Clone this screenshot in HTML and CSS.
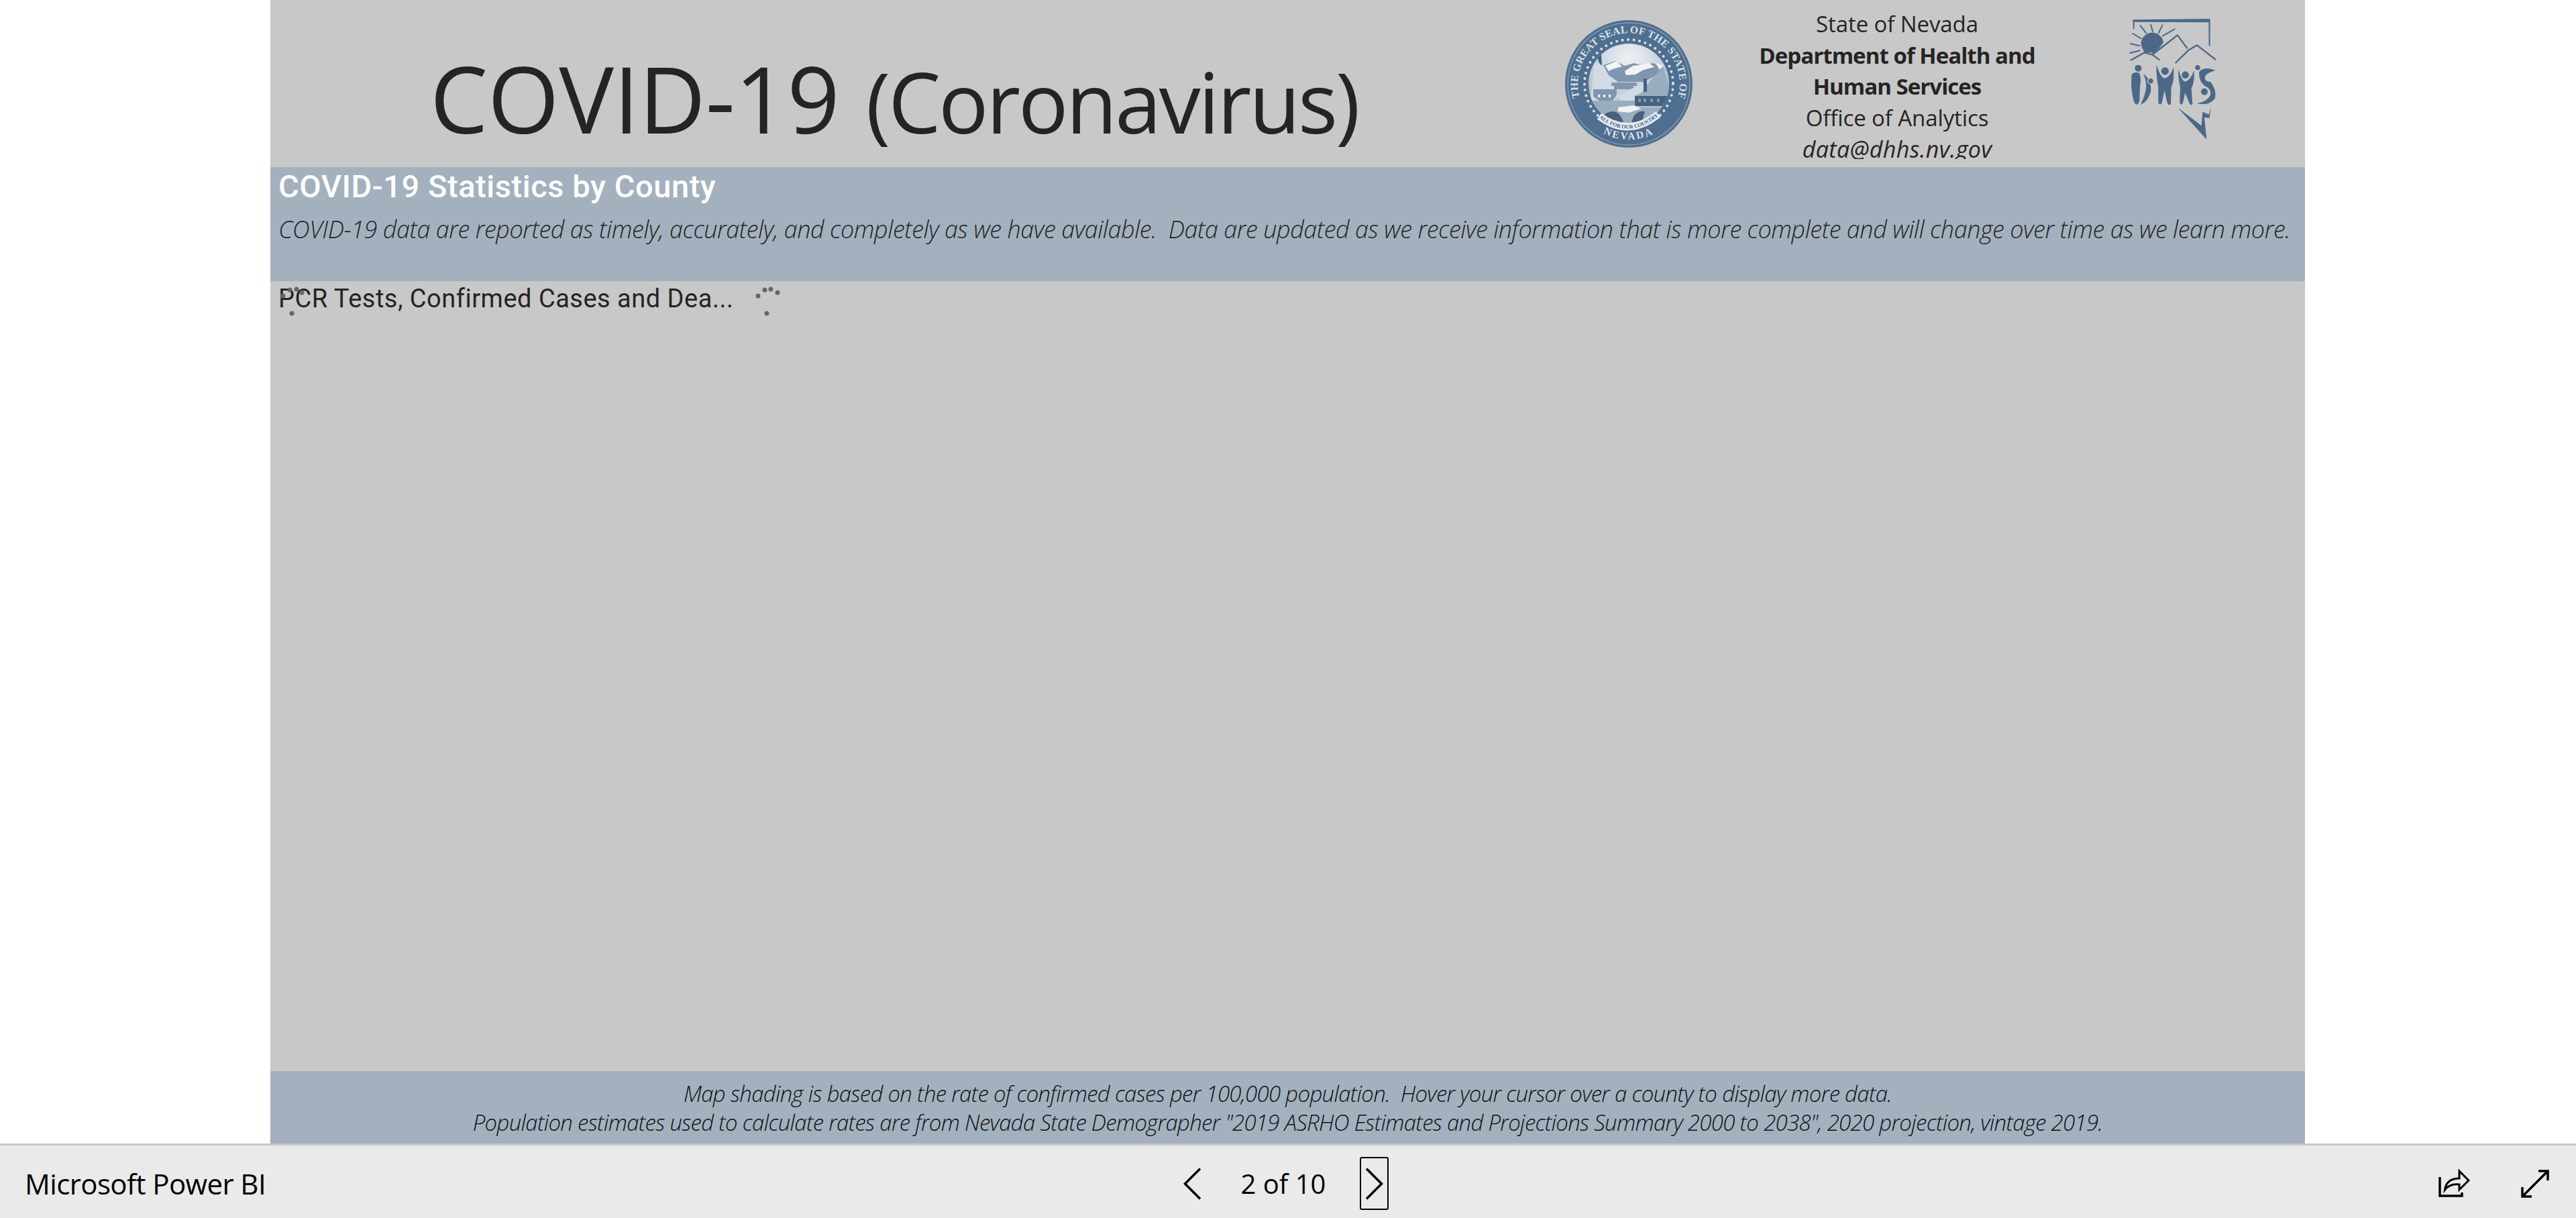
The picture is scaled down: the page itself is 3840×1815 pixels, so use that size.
FILE: index.html
```html
<!DOCTYPE html>
<html lang="en">
<head>
<meta charset="utf-8">
<title>Microsoft Power BI</title>
<link rel="stylesheet" href="styles.css">
</head>
<body>
<main class="report">
  <header class="masthead">
    <h1 class="title"><span class="title-main">COVID-19</span> <span class="title-sub">(Coronavirus)</span></h1>
    <svg class="seal" viewBox="0 0 250 230" aria-label="Great Seal of the State of Nevada">
      <defs>
        <clipPath id="sceneClip"><circle cx="128" cy="115" r="60"/></clipPath>
        <radialGradient id="sky" cx="50%" cy="18%" r="62%">
          <stop offset="0" stop-color="#eef1f4"/>
          <stop offset="1" stop-color="#b4c2d0"/>
        </radialGradient>
      </defs>
      <circle class="seal-edge" cx="128" cy="115" r="95"/>
      <circle class="seal-line" cx="128" cy="115" r="91"/>
      <path id="sealTop" class="seal-guide" d="M54.600 135A76 76 0 1 1 201.400 135"/>
      <path id="sealBottom" class="seal-guide" d="M83 184.700A83 83 0 0 0 173 184.700"/>
      <text class="seal-text"><textPath href="#sealTop" textLength="279" lengthAdjust="spacing">THE GREAT SEAL OF THE STATE OF</textPath></text>
      <text class="seal-text seal-text-low"><textPath href="#sealBottom" startOffset="50%" text-anchor="middle">NEVADA</textPath></text>
      <circle class="seal-dots" cx="128" cy="115" r="66"/>
      <circle cx="128" cy="115" r="60" fill="url(#sky)"/>
      <g clip-path="url(#sceneClip)">
        <path class="scene-soft" d="M157 113L180 90L192 132L170 132Z"/>
        <path class="scene-mid" d="M90 87L108 81L122 88L136 84L150 88L164 84L180 90L166 104L150 112L112 112L98 102Z"/>
        <path class="scene-snow" d="M93 88L110 81L118 89L104 93L98 96ZM122 96L134 88L150 86L157 83L166 90L150 94L138 101L124 102ZM168 84L180 88L174 94Z"/>
        <path class="scene-hill" d="M77 84L88 84L98 104L113 133L102 145L70 145Z"/>
        <path class="scene-dark" d="M80 72L87 72L88 88L84 84Z"/>
        <path class="scene-mid" d="M102 113H140V118H135V123H106V118H102Z"/>
        <path class="scene-hill" d="M113 133L132 122L150 116L146 136L136 147L118 146Z"/>
        <path class="scene-soft" d="M154 116L168 112L188 133H137L150 126Z"/>
        <path class="scene-dark" d="M150 127V107H155V127ZM137 133H187V148H137Z"/>
        <path class="scene-mid" d="M142 137h4v5h-4zM150 137h4v5h-4zM160 137h4v5h-4zM170 137h4v5h-4z"/>
        <path class="scene-mid" d="M75 123H110V132L104 140H84L75 134Z"/>
        <path class="scene-snow" d="M82 131h3v4h-3zM90 131h3v4h-3zM98 131h3v4h-3z"/>
        <path class="scene-soft" d="M68 140H137V150H190V180H68Z"/>
        <path class="scene-snow" d="M112 150L136 147L146 152L128 158L112 156Z"/>
        <path class="scene-dark" d="M92 160Q112 148 120 172L96 178ZM132 176Q134 154 152 156L146 178Z"/>
      </g>
      <path class="seal-ribbon" d="M84 163Q128 196 172 160"/>
      <path id="sealMotto" class="seal-guide" d="M84 166Q128 199 172 163"/>
      <text class="seal-motto"><textPath href="#sealMotto" startOffset="50%" text-anchor="middle">ALL FOR OUR COUNTRY</textPath></text>
    </svg>
    <div class="agency">
      <p class="agency-line">State of Nevada</p>
      <p class="agency-line agency-strong">Department of Health and</p>
      <p class="agency-line agency-strong">Human Services</p>
      <p class="agency-line">Office of Analytics</p>
      <p class="agency-line agency-mail">data@dhhs.nv.gov</p>
    </div>
    <svg class="dhhs" viewBox="0 0 600 690" aria-label="DHHS logo">
      <path class="logo-fill" d="M118 58L120 100L125 100L125 68L457 70L458 175L464 175L464 54Z"/>
      <path class="logo-ray" d="M152 85L178 118M199 80L207 112M250 82L233 118M305 100L252 130M118 120L155 142M108 165L148 175M105 207L150 196"/>
      <path class="logo-fill" d="M155 172A50 50 0 0 1 255 160L215 212L200 205L170 206Z"/>
      <path class="logo-ridge" d="M108 240L170 205L205 214L238 238M205 214L250 180L318 127L362 187"/>
      <path class="logo-ridge" d="M308 252L365 196L405 172L490 238"/>
      <circle class="logo-fill" cx="142" cy="275" r="15"/>
      <path class="logo-fill" d="M112 312Q112 290 145 295Q158 312 150 360L148 420Q140 448 125 430Q108 380 112 312Z"/>
      <path class="logo-fill" d="M165 300Q205 330 198 380Q185 425 153 438Q175 390 178 360Q178 325 165 300Z"/>
      <circle class="logo-gap" cx="198" cy="332" r="15"/>
      <circle class="logo-fill" cx="198" cy="332" r="11"/>
      <circle class="logo-fill" cx="262" cy="288" r="17"/>
      <path class="logo-fill" d="M224 258Q240 315 260 320Q285 315 300 270Q305 330 290 360L288 435Q280 445 272 430L260 375L248 430Q240 445 232 430L232 360Q222 310 224 258Z"/>
      <circle class="logo-fill" cx="353" cy="305" r="16"/>
      <path class="logo-fill" d="M322 278Q335 330 352 335Q375 330 392 285Q395 340 380 365L385 435Q378 445 370 430L352 385L342 430Q335 445 328 430L330 360Q320 320 322 278Z"/>
      <circle class="logo-fill" cx="408" cy="272" r="11"/>
      <path class="logo-fill" d="M415 290Q440 265 488 285Q450 295 442 310Q435 335 465 335Q495 375 485 410Q460 445 405 432Q450 425 465 395Q470 365 440 355Q410 330 415 290Z"/>
      <circle class="logo-gap" cx="438" cy="380" r="18"/>
      <circle class="logo-fill" cx="438" cy="380" r="15"/>
      <path class="logo-fill" d="M318 450L445 590L448 590L438 495L461 498L468 450L458 482L430 470L425 532Z"/>
    </svg>
  </header>

  <section class="intro">
    <h2 class="intro-title">COVID-19 Statistics by County</h2>
    <p class="intro-text">COVID-19 data are reported as timely, accurately, and completely as we have available.&nbsp; Data are updated as we receive information that is more complete and will change over time as we learn more.</p>
  </section>

  <section class="stage">
    <h3 class="visual-title">PCR Tests, Confirmed Cases and Dea...</h3>
    <svg class="spinner" width="760" height="60" viewBox="0 0 760 60" aria-hidden="true">
      <circle class="dot" cx="19" cy="22" r="3.5"/>
      <circle class="dot" cx="29" cy="13" r="3.5"/>
      <circle class="dot" cx="39" cy="12" r="3.5"/>
      <circle class="dot" cx="47" cy="17" r="3.5"/>
      <circle class="dot" cx="32" cy="48" r="3.5"/>
      <circle class="dot" cx="727" cy="22" r="3.5"/>
      <circle class="dot" cx="737" cy="13" r="3.5"/>
      <circle class="dot" cx="746" cy="12" r="3.5"/>
      <circle class="dot" cx="756" cy="17" r="3.5"/>
      <circle class="dot" cx="740" cy="48" r="3.5"/>
    </svg>
  </section>

  <footer class="notes">
    <p class="note">Map shading is based on the rate of confirmed cases per 100,000 population.&nbsp; Hover your cursor over a county to display more data.</p>
    <p class="note">Population estimates used to calculate rates are from Nevada State Demographer "2019 ASRHO Estimates and Projections Summary 2000 to 2038", 2020 projection, vintage 2019.</p>
  </footer>
</main>

<nav class="toolbar">
  <a class="brand">Microsoft Power BI</a>
  <div class="pager">
    <button class="nav-btn" aria-label="Previous page">
      <svg width="27" height="48" viewBox="0 0 27 48"><path class="glyph" d="M25 1.500L2.500 24L25 46.500"/></svg>
    </button>
    <span class="page-count">2 of 10</span>
    <button class="nav-btn nav-btn-focus" aria-label="Next page">
      <svg width="27" height="48" viewBox="0 0 27 48"><path class="glyph" d="M2 1.500L24.500 24L2 46.500"/></svg>
    </button>
  </div>
  <div class="actions">
    <svg class="action" width="48" height="44" viewBox="0 0 48 44" aria-label="Share">
      <path class="glyph" d="M3 12V40H36V35"/>
      <path class="glyph glyph-thin" d="M10.500 31C12 20 19 14 32 14V3L46 17L32 31V23C22 22 15 25 10.500 31Z"/>
    </svg>
    <svg class="action" width="44" height="44" viewBox="0 0 44 44" aria-label="Full screen">
      <path class="glyph" d="M3 41L41 3M27 3H41V17M3 27V41H17"/>
    </svg>
  </div>
</nav>
</body>
</html>
```
FILE: styles.css
```css
* { box-sizing: border-box; }
html, body { margin: 0; padding: 0; }
body {
  width: 3840px;
  height: 1815px;
  display: flex;
  flex-direction: column;
  overflow: hidden;
  background: #fff;
  color: #252423;
  font-family: "Open Sans", "Noto Sans", sans-serif;
}
p, h1, h2, h3 { margin: 0; font-weight: 400; }

.report {
  width: 3033px;
  height: 1704px;
  margin-left: 403px;
  display: flex;
  flex-direction: column;
  background: #c8c8c8;
}

.masthead {
  height: 249px;
  display: flex;
  align-items: flex-start;
}
.title {
  width: 1897px;
  padding: 64px 0 0 238px;
  font-size: 124px;
  white-space: nowrap;
  line-height: 164px;
  color: #252423;
}
.title-main { font-size: 137px; letter-spacing: -0.3px; }
.title-sub { font-size: 124px; letter-spacing: -3.2px; margin-left: 7px; }

.seal { width: 250px; height: 230px; margin-top: 10px; flex: none; }
.seal-edge { fill: #4f6f90; }
.seal-line { fill: none; stroke: #7f98b0; stroke-width: 1.5; }
.seal-guide { fill: none; }
.seal-text { fill: #dbe3ea; font: 700 15.5px "Liberation Serif", serif; }
.seal-text-low { letter-spacing: 2.5px; }
.seal-dots { fill: none; stroke: #dbe3ea; stroke-width: 4; stroke-linecap: round; stroke-dasharray: 0 8.6; }
.seal-motto { fill: #3f5d7c; font: 700 8px "Liberation Serif", serif; }
.seal-ribbon { fill: none; stroke: #e6ebf0; stroke-width: 11; }
.scene-snow { fill: #f1f3f5; }
.scene-mid { fill: #7f97ae; }
.scene-hill { fill: #d2dbe3; }
.scene-dark { fill: #46627f; }
.scene-soft { fill: #9aadbf; }

.agency {
  width: 554px;
  height: 237px;
  margin: 0 10px 0 1px;
  padding-top: 13px;
  overflow: hidden;
  flex: none;
  text-align: center;
  color: #252423;
}
.agency-line { font-size: 33px; line-height: 46.5px; letter-spacing: -0.1px; white-space: nowrap; }
.agency-strong { font-weight: 700; letter-spacing: -0.95px; }
.agency-mail { font-size: 34px; letter-spacing: 0.4px; font-style: italic; }

.dhhs { width: 200px; height: 230px; margin: 10px 0 0 25px; flex: none; }
.logo-fill { fill: #4b6987; }
.logo-gap { fill: #c8c8c8; }
.logo-ray { fill: none; stroke: #4b6987; stroke-width: 6; stroke-linecap: round; }
.logo-ridge { fill: none; stroke: #4b6987; stroke-width: 7; stroke-linejoin: round; }

.intro {
  height: 170px;
  padding: 3px 12px 0;
  background: #a3b1bf;
}
.intro-title {
  font-family: Roboto, "Open Sans", sans-serif;
  font-size: 47px;
  font-weight: 500;
  line-height: 52px;
  letter-spacing: 0.55px;
  color: #fff;
}
.intro-text {
  margin-top: 13px;
  font-size: 36px;
  font-weight: 300;
  line-height: 50px;
  font-style: italic;
  letter-spacing: -0.465px;
  white-space: nowrap;
  color: #252423;
}

.stage {
  flex: 1;
  position: relative;
  padding: 1px 12px 0;
}
.visual-title {
  font-family: Roboto, "Open Sans", sans-serif;
  font-size: 38px;
  line-height: 50px;
  letter-spacing: 0.5px;
  color: #252423;
}
.spinner { position: absolute; left: 0; top: 0; }
.dot { fill: #666; }

.notes {
  height: 108px;
  padding-top: 12px;
  background: #a3b1bf;
  text-align: center;
  color: #111;
}
.note { font-size: 33px; font-weight: 300; line-height: 43px; font-style: italic; letter-spacing: -0.7px; white-space: nowrap; }

.toolbar {
  height: 111px;
  border-top: 3px solid #c8c8c8;
  background: #eaeaea;
  padding: 5px 39px 0 37px;
  display: grid;
  grid-template-columns: 1fr auto 1fr;
  align-items: center;
  color: #000;
}
.brand { font-size: 42px; letter-spacing: -0.6px; white-space: nowrap; }
.pager { display: flex; align-items: center; margin-right: 12px; }
.nav-btn {
  width: 43px;
  height: 79px;
  margin: 0;
  padding: 0;
  display: flex;
  align-items: center;
  justify-content: center;
  background: none;
  border: 2px solid transparent;
  border-radius: 3px;
}
.nav-btn-focus { border-color: #000; }
.page-count { width: 228px; text-align: center; font-size: 40px; letter-spacing: 0; white-space: nowrap; }
.actions { display: flex; justify-content: flex-end; align-items: center; gap: 75px; }
.action { flex: none; }
.glyph { fill: none; stroke: #000; stroke-width: 3.500; }
.glyph-thin { stroke-width: 3; }
```
